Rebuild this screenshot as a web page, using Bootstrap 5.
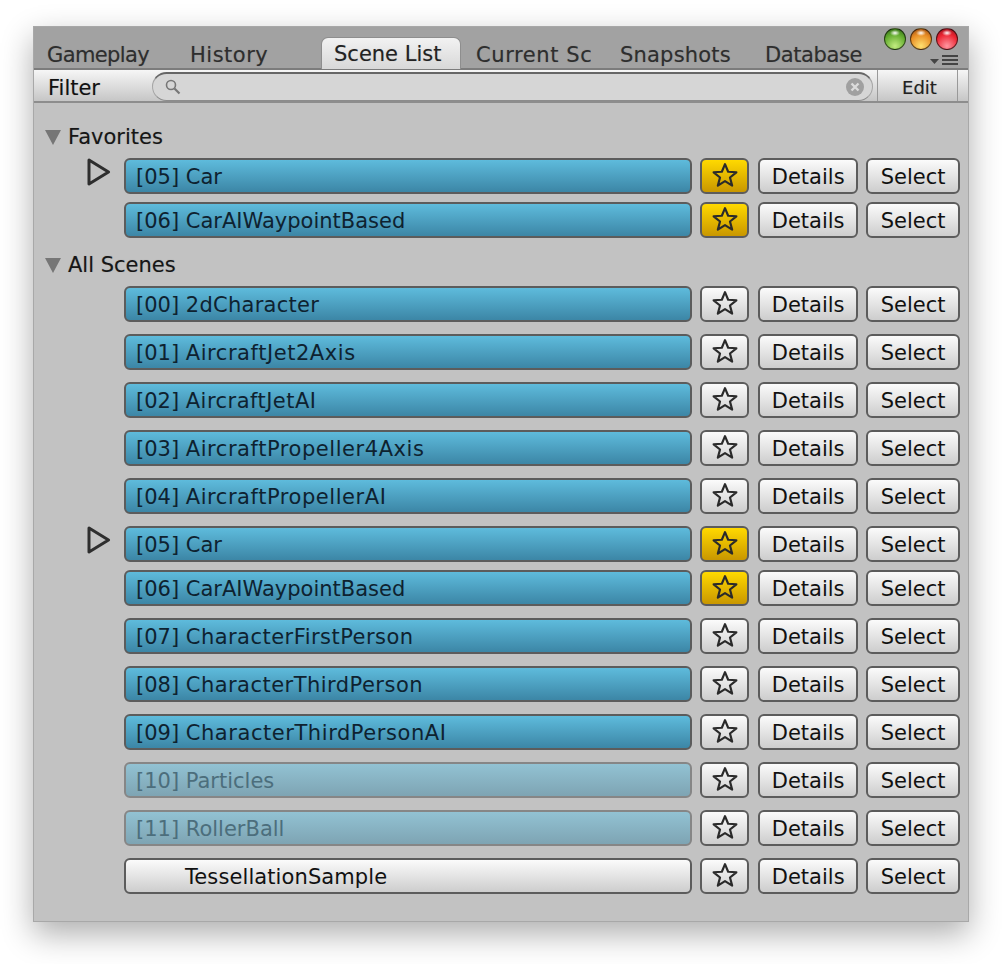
<!DOCTYPE html>
<html lang="en">
<head>
    <meta charset="UTF-8">
    <meta name="viewport" content="width=device-width, initial-scale=1.0">
    <title>Scene List</title>
    <link href="https://cdn.jsdelivr.net/npm/bootstrap@5.3.0/dist/css/bootstrap.min.css" rel="stylesheet">
    <style>
        body {
            background-color: #fff;
            font-family: "DejaVu Sans", sans-serif;
            color: #111;
            margin: 0;
            min-height: 964px;
            padding: 26px 0 42px 33px;
        }
        .editor-window {
            width: 936px;
            height: 896px;
            background: #c2c2c2;
            border: 1px solid #a8a8a8;
            box-shadow: 0 12px 30px rgba(0, 0, 0, .32);
            font-size: 21px;
            text-shadow: 0 0 1px rgba(0, 0, 0, .25);
        }
        .tab-strip {
            height: 43px;
            background: #a2a2a2;
            border-bottom: 2px solid #7c7c7c;
            padding-left: 13px;
        }
        .tab-cell {
            padding-top: 13px;
            color: #2e2e2e;
            white-space: nowrap;
            overflow: hidden;
            line-height: 30px;
        }
        .tab-gameplay { width: 143px; letter-spacing: -.6px; }
        .tab-history { width: 131px; letter-spacing: .5px; }
        .tab-scenes {
            width: 140px;
            height: 32px;
            margin: 10px 15px 0 0;
            padding: 1px 0 0 12px;
            background: linear-gradient(#f2f2f2, #d8d8d8);
            border: 1px solid #8e8e8e;
            border-bottom: 0;
            border-radius: 7px 7px 0 0;
            color: #222;
        }
        .tab-current { width: 115px; margin-right: 29px; letter-spacing: .6px; }
        .tab-snapshots { width: 145px; letter-spacing: .2px; }
        .tab-database { width: 100px; letter-spacing: -.4px; }
        .traffic-dot {
            position: absolute;
            top: 1px;
            width: 22px;
            height: 22px;
            border-radius: 50%;
            border: 1px solid rgba(0, 0, 0, .6);
        }
        .dot-green {
            left: 850px;
            background: radial-gradient(ellipse 5px 3px at 50% 20%, #fff, transparent),
                radial-gradient(circle at 50% 85%, #c2ec80, #62ab2e 60%, #2a6114);
        }
        .dot-orange {
            left: 876px;
            background: radial-gradient(ellipse 5px 3px at 50% 20%, #fff, transparent),
                radial-gradient(circle at 50% 85%, #ffe070, #e88c24 60%, #8f4412);
        }
        .dot-red {
            left: 902px;
            background: radial-gradient(ellipse 5px 3px at 50% 20%, #fff, transparent),
                radial-gradient(circle at 50% 85%, #ff96a0, #ec2432 60%, #8a121c);
        }
        .pane-menu { position: absolute; left: 896px; top: 27px; }
        .filter-bar {
            height: 33px;
            background: linear-gradient(#f6f6f6, #c6c6c6);
            border-bottom: 2px solid #8d8d8d;
        }
        .filter-label { width: 118px; padding-left: 14px; line-height: 36px; }
        .search-field {
            width: 721px;
            height: 29px;
            margin-top: 2px;
            background: #d6d6d6;
            border: 1px solid #a6a6a6;
            border-top: 2px solid #666;
            border-bottom-color: #8c8c8c;
            border-radius: 15px;
            padding: 0 7px 0 11px;
        }
        .edit-btn {
            width: 81px;
            margin-left: 4px;
            padding-left: 4px;
            border-left: 1px solid #999;
            border-right: 1px solid #999;
            font-size: 18px;
            text-align: center;
            line-height: 35px;
            color: #222;
        }
        .scene-pane { padding: 22px 8px 0 0; }
        .group-head { height: 24px; line-height: 24px; padding-left: 11px; color: #161616; }
        .favorites-head { margin-bottom: 9px; }
        .scenes-head { margin-top: 15px; margin-bottom: 9px; }
        .group-arrow {
            width: 0;
            height: 0;
            margin-right: 7px;
            border-left: 8.5px solid transparent;
            border-right: 8.5px solid transparent;
            border-top: 15px solid #767676;
        }
        .scene-row { height: 36px; }
        .gap-sm { margin-bottom: 8px; }
        .gap-lg { margin-bottom: 12px; }
        .play-slot { width: 90px; padding: 0 13px 0 53px; }
        .ed-btn {
            height: 36px;
            border: 2px solid #5c5c5c;
            border-radius: 6px;
            background: linear-gradient(#fbfbfb, #cdcdcd);
            color: #111;
            font-size: 21px;
            line-height: 31px;
            text-align: center;
            padding: 2px 0 0;
        }
        .scene-bar {
            width: 569px;
            margin-right: 8px;
            padding-left: 10px;
            text-align: left;
            white-space: nowrap;
            background: linear-gradient(#5ebbdc, #3c86a6);
            color: #0e2230;
        }
        .scene-bar.scene-off {
            background: linear-gradient(#92c2d3, #7ea4b3);
            border-color: #868686;
            color: #4c6e7c;
        }
        .scene-bar.scene-plain {
            padding-left: 59px;
            background: linear-gradient(#fbfbfb, #cdcdcd);
            color: #111;
            letter-spacing: .1px;
        }
        .track-s { letter-spacing: .27px; }
        .track-m { letter-spacing: .47px; }
        .track-l { letter-spacing: .56px; }
        .star-btn { width: 49px; margin-right: 9px; padding: 0 0 2px; }
        .star-btn.star-on { background: linear-gradient(#ffd900, #c99700); }
        .details-btn { width: 100px; margin-right: 8px; }
        .select-btn { width: 94px; }
    </style>
</head>
<body>
    <svg width="0" height="0" class="d-block">
        <symbol id="star" viewBox="0 0 24 24">
            <path d="M12 2 14.9 9 22.5 9.5 16.6 14.3 18.6 21.8 12 17.7 5.4 21.8 7.4 14.3 1.5 9.5 9.1 9Z" fill="none" stroke="#2a2a2a" stroke-width="2" stroke-linejoin="round"/>
        </symbol>
    </svg>

    <div class="editor-window d-flex flex-column">
        <div class="tab-strip d-flex position-relative">
            <div class="tab-cell tab-gameplay">Gameplay</div>
            <div class="tab-cell tab-history">History</div>
            <div class="tab-cell tab-scenes">Scene List</div>
            <div class="tab-cell tab-current">Current Sc</div>
            <div class="tab-cell tab-snapshots">Snapshots</div>
            <div class="tab-cell tab-database">Database</div>
            <span class="traffic-dot dot-green"></span>
            <span class="traffic-dot dot-orange"></span>
            <span class="traffic-dot dot-red"></span>
            <svg class="pane-menu" width="28" height="12" viewBox="0 0 28 12">
                <path d="M0 5H9L4.5 10Z" fill="#444"/>
                <path d="M12 2H28M12 6H28M12 10H28" stroke="#444" stroke-width="2"/>
            </svg>
        </div>

        <div class="filter-bar d-flex">
            <div class="filter-label">Filter</div>
            <div class="search-field d-flex align-items-center justify-content-between">
                <svg width="18" height="18" viewBox="0 0 18 18">
                    <circle cx="7" cy="7" r="4.5" fill="none" stroke="#777" stroke-width="1.6"/>
                    <path d="M10.5 10.5 15.5 15.5" stroke="#777" stroke-width="2.2"/>
                </svg>
                <svg width="20" height="20" viewBox="0 0 20 20">
                    <circle cx="10" cy="10" r="9" fill="#a0a0a0"/>
                    <path d="M6.5 6.5 13.5 13.5M13.5 6.5 6.5 13.5" stroke="#dcdcdc" stroke-width="2.4"/>
                </svg>
            </div>
            <div class="edit-btn">Edit</div>
        </div>

        <div class="scene-pane" id="pane"></div>
    </div>

    <script>
        const favorites = [
            { id: "[05]", name: "Car", on: true, playing: true },
            { id: "[06]", name: "CarAIWaypointBased", on: true }
        ];
        const allScenes = [
            { id: "[00]", name: "2dCharacter", track: "track-s" },
            { id: "[01]", name: "AircraftJet2Axis", track: "track-l" },
            { id: "[02]", name: "AircraftJetAI", track: "track-m" },
            { id: "[03]", name: "AircraftPropeller4Axis", track: "track-l" },
            { id: "[04]", name: "AircraftPropellerAI", track: "track-l" },
            { id: "[05]", name: "Car", on: true, playing: true },
            { id: "[06]", name: "CarAIWaypointBased", on: true },
            { id: "[07]", name: "CharacterFirstPerson", track: "track-m" },
            { id: "[08]", name: "CharacterThirdPerson", track: "track-m" },
            { id: "[09]", name: "CharacterThirdPersonAI", track: "track-l" },
            { id: "[10]", name: "Particles", kind: "scene-off" },
            { id: "[11]", name: "RollerBall", kind: "scene-off" },
            { id: "", name: "TessellationSample", kind: "scene-plain" }
        ];

        function sceneRow(scene) {
            // the row holding the playing scene sits closer to the next one
            let gap = scene.playing ? "gap-sm" : "gap-lg";
            let arrow = scene.playing
                ? `<svg class="d-block" width="24" height="28" viewBox="0 0 24 28"><path d="M2 2 21.5 14 2 26Z" fill="none" stroke="#2e2e2e" stroke-width="3" stroke-linejoin="round"/></svg>`
                : "";
            return `
                <div class="scene-row d-flex ${gap}">
                    <div class="play-slot">${arrow}</div>
                    <button class="ed-btn scene-bar ${scene.kind || ""}">${scene.id} <span class="${scene.track || ""}">${scene.name}</span></button>
                    <button class="ed-btn star-btn ${scene.on ? "star-on" : ""}"><svg class="d-block mx-auto" width="26" height="26"><use href="#star"/></svg></button>
                    <button class="ed-btn details-btn">Details</button>
                    <button class="ed-btn select-btn">Select</button>
                </div>`;
        }

        function groupHead(title, extra) {
            return `<div class="group-head d-flex align-items-center ${extra}"><span class="group-arrow"></span>${title}</div>`;
        }

        document.getElementById("pane").innerHTML =
            groupHead("Favorites", "favorites-head") + favorites.map(sceneRow).join("") +
            groupHead("All Scenes", "scenes-head") + allScenes.map(sceneRow).join("");
    </script>
    <script src="https://cdn.jsdelivr.net/npm/bootstrap@5.3.0/dist/js/bootstrap.bundle.min.js"></script>
</body>
</html>
